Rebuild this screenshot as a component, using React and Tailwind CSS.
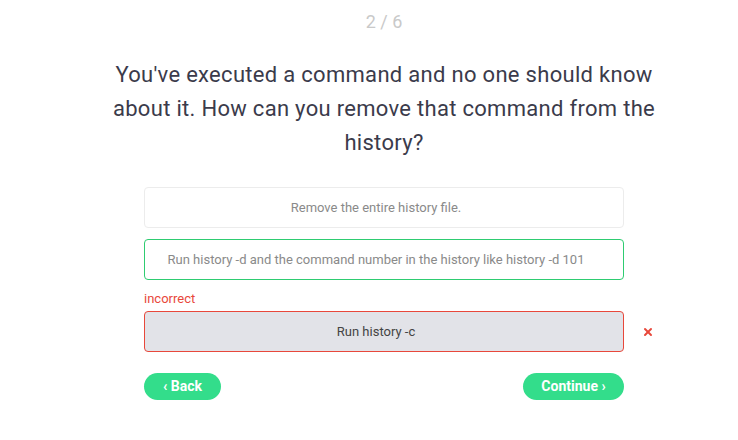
import { X } from 'lucide-react'

const options = [
  { text: 'Remove the entire history file.', state: 'idle' },
  { text: 'Run history -d and the command number in the history like history -d 101', state: 'correct' },
  { text: 'Run history -c', state: 'wrong' },
]

export default function App() {
  return (
    <div className="min-h-[440px] bg-white font-['Roboto',sans-serif] pl-[30px] flex justify-center">
      <div className="w-[560px] flex flex-col items-center pt-[9px]">
        <div className="text-[18px] leading-[26px] text-[#c9c9c9]">2 / 6</div>
        <h1 className="mt-[23px] text-[22px] leading-[34px] tracking-[0.3px] text-[#3b3b4b] text-center font-normal">
          You've executed a command and no one should know about it. How can you remove that command from the history?
        </h1>

        <div className="w-[480px] mt-[27px] flex flex-col">
          {options.map((o, i) => (
            <div key={i} className={i > 0 ? 'mt-[11px]' : ''}>
              {o.state === 'wrong' && (
                <div className="text-[13px] leading-[15px] text-[#e8483b] mb-[5px]">incorrect</div>
              )}
              <div className="relative">
                <div
                  className={`h-[41px] rounded-[4px] border flex items-center justify-center pr-[16px] text-[13px] ${
                    o.state === 'correct'
                      ? 'border-[#2ecc71] text-[#8a8a8a]'
                      : o.state === 'wrong'
                      ? 'border-[#e8483b] bg-[#e2e3e8] text-[#444]'
                      : 'border-[#ececec] text-[#8a8a8a]'
                  }`}
                >
                  {o.text}
                </div>
                {o.state === 'wrong' && (
                  <X size={12} strokeWidth={4} className="absolute right-[-30px] top-[15px] text-[#e8483b]" />
                )}
              </div>
            </div>
          ))}

          <div className="flex justify-between mt-[21px]">
            <button className="h-[27px] w-[77px] rounded-full bg-[#33dd8b] text-white text-[14px] font-bold">
              ‹ Back
            </button>
            <button className="h-[27px] w-[101px] rounded-full bg-[#33dd8b] text-white text-[14px] font-bold">
              Continue ›
            </button>
          </div>
        </div>
      </div>
    </div>
  )
}
